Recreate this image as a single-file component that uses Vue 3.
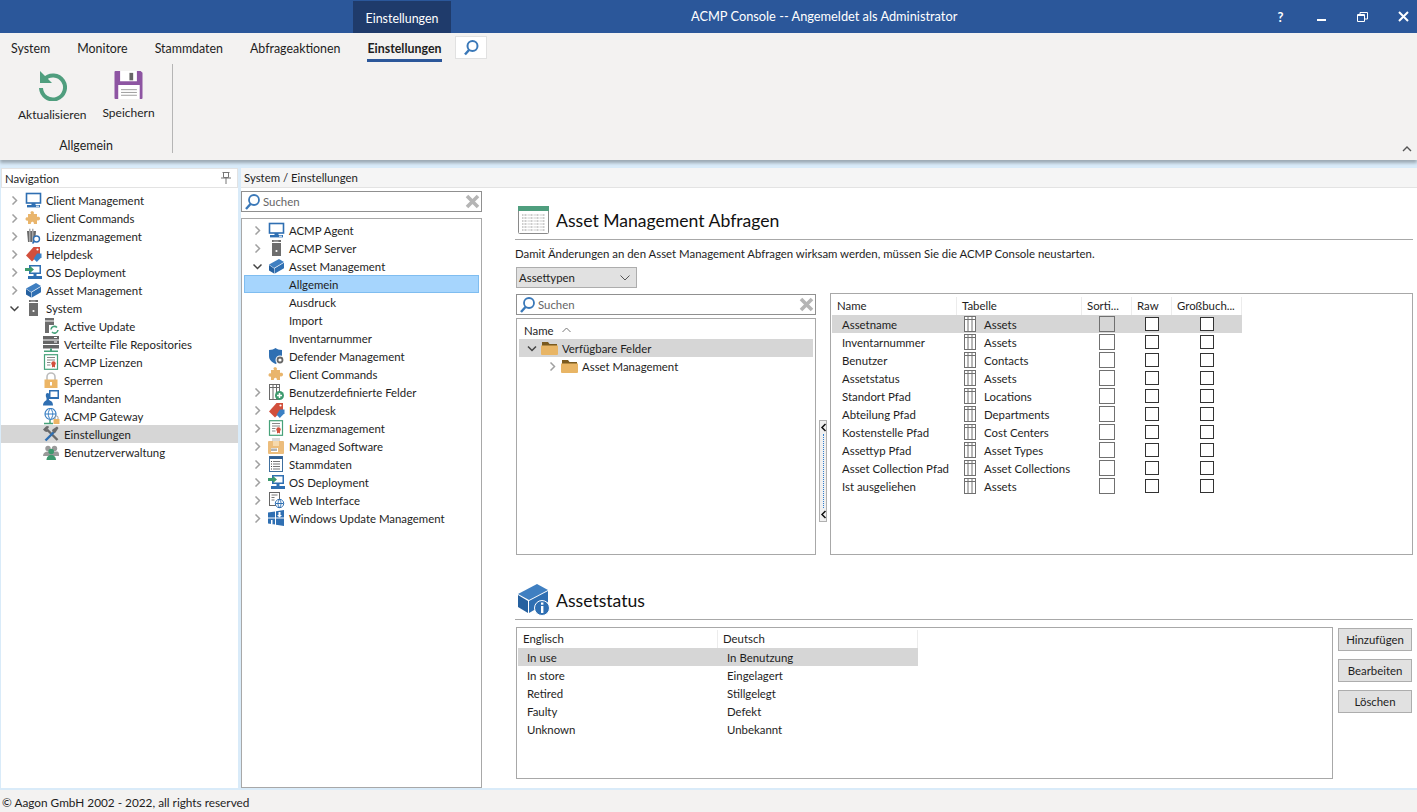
<script setup>
const tabs = ['System', 'Monitore', 'Stammdaten', 'Abfrageaktionen', 'Einstellungen']

const icons = {
  monitor: '<rect x="1.5" y="1.5" width="14" height="9.5" fill="#fff" stroke="#2f6fb2" stroke-width="1.6"/><rect x="6.5" y="11" width="4" height="2" fill="#2f6fb2"/><rect x="2" y="13" width="13" height="2.4" fill="#2f6fb2"/><rect x="11" y="13.7" width="3" height="1" fill="#fff"/>',
  puzzle: '<path fill="#e9b56c" d="M6 1.5c2-1 3.6.4 2.7 2.4H12v3.2c2-.9 3.8.5 2.8 2.4-.8 1.3-1.8 1.2-2.8.8V14H8.800c.7-2-2-3-2.800-1.300-.3.500-.2 1 0 1.300H3V10.500C1 11.400-.2 9 1 7.800c.6-.6 1.300-.5 2-.2V3.900h3.200C5.300 3 5.200 2 6 1.500z"/>',
  licence: '<path fill="#6a6a6a" d="M2 3h9l-1 11H3z"/><path fill="#a8a8a8" d="M4 .8h1.500V14H4zM7 .8h1.500V14H7z"/><circle cx="11.500" cy="11" r="3" fill="#fff" stroke="#2f6fb2" stroke-width="1.400"/><path stroke="#2f6fb2" stroke-width="1.600" d="M9.500 13l-2 2.500"/>',
  tag: '<path fill="#d24f3c" d="M8.500 1H15v6.500L7 15.500 1 9.500z"/><circle cx="12.500" cy="3.500" r="1.100" fill="#fff"/><path fill="#3b80c4" d="M12 7.500h4.500v3.800L11.800 16 8.600 12.800z"/>',
  deploy: '<rect x="4" y="1" width="12" height="9" fill="#2f6fb2"/><rect x="5.500" y="2.500" width="9" height="6" fill="#fff"/><path fill="#2f6fb2" d="M8.500 10h3v2h-3zM3 12h14v3H3z"/><path fill="#3d9a6e" d="M0 4h5V2l4 3.500L5 9V7H0z"/>',
  box: '<path fill="#3f7fc1" d="M1 6.500 11 1l5 3-10 6z"/><path fill="#25609f" d="M1 7v5.500L6 15.500V10.500z"/><path fill="#2f6fb2" d="M6.500 10.500 16 4.800v5.500L6.500 15.800z"/>',
  server: '<rect x="4" y="0" width="9" height="16" fill="#6d6d6d"/><rect x="4" y="2" width="9" height="1" fill="#fff"/><rect x="5.500" y=".7" width="5" height=".8" fill="#ccc"/><circle cx="8.500" cy="11" r="1.100" fill="#fff"/>',
  update: '<rect x="2" y="0" width="9" height="15" fill="#6d6d6d"/><rect x="2" y="2.500" width="9" height="1" fill="#fff"/><path fill="#fff" d="M6 7h11v10H6z"/><path fill="none" stroke="#47a27a" stroke-width="1.600" d="M8 11.500a3.500 3.500 0 0 1 6-2M15 12a3.500 3.500 0 0 1-6 2"/>',
  repo: '<rect x="0" y="0" width="16" height="3.500" fill="#666"/><rect x="0" y="4.500" width="16" height="3.500" fill="#666"/><rect x="0" y="9" width="16" height="3.500" fill="#666"/><rect x="11" y="1" width="3" height="1" fill="#fff"/><rect x="11" y="5.500" width="3" height="1" fill="#fff"/><rect x="7" y="12.500" width="2" height="2.500" fill="#47a27a"/><rect x="1" y="14.500" width="14" height="1.500" fill="#47a27a"/>',
  cert: '<rect x="1.500" y=".7" width="13" height="14.600" fill="#fff" stroke="#47a27a" stroke-width="1.200"/><path stroke="#888" d="M4 3.500h8M4 6h8M4 8.500h3.500M4 11h3.500"/><circle cx="10.500" cy="9.500" r="2.200" fill="#d24f3c"/><path fill="#d24f3c" d="M9 11h3v2.500l-1.500-.8-1.500.8z"/>',
  lock: '<path fill="none" stroke="#bdbdbd" stroke-width="1.600" d="M4 8V5a4 4 0 0 1 8 0v3"/><rect x="1.500" y="7.500" width="13" height="8.500" fill="#ecb565"/><rect x="7" y="10" width="2" height="3.500" fill="#fff"/>',
  tenant: '<rect x="6" y="0" width="10" height="9" fill="#2f6fb2"/><rect x="7.500" y="1.500" width="7" height="5.500" fill="#fff"/><path fill="#2f6fb2" d="M4.500 3c2.500 0 2.500 3.500 1.500 5v2c1.500 1 4 1 4 5.500H0C0 12 2.500 11 3.500 10V8C2.500 6 2.500 3 4.500 3z"/>',
  gateway: '<circle cx="7.500" cy="6" r="5.500" fill="#fff" stroke="#3b80c4" stroke-width="1.200"/><path fill="none" stroke="#3b80c4" d="M2 6h11M7.500.5c-3 3-3 8 0 11M7.500.5c3 3 3 8 0 11"/><path stroke="#47a27a" stroke-width="1.500" d="M7 12v3M1 15.500h9"/><rect x="10.500" y="11" width="6" height="5" fill="#ecb565"/><path fill="none" stroke="#999" d="M12 11V9.500a1.500 1.500 0 0 1 3 0V11"/>',
  tools: '<path fill="none" stroke="#6a6a6a" stroke-width="2.400" d="M4 3.500 14.500 14"/><path fill="#6a6a6a" d="M0 3.500 3 .5l1-.5 2 .5-.5 1.500-2 2 2 .5-1.500 1.500-2-.5z"/><path fill="none" stroke="#2f6fb2" stroke-width="2.400" d="M12 5 2.500 14.500"/><path fill="#6a6a6a" d="M9.500 3.500 14 .5l1.500 1.500L12.500 6.500l-1.500.5-2-2z"/>',
  users: '<circle cx="5" cy="4.500" r="2.700" fill="#9a9a9a"/><circle cx="11.500" cy="4.500" r="2.700" fill="#9a9a9a"/><path fill="#9a9a9a" d="M0 12c0-3 2-4.500 5-4.500s6 0 8.500 0S16 9 16 12z"/><circle cx="8.200" cy="7.500" r="2.800" fill="#3d9a6e"/><path fill="#3d9a6e" d="M3.500 16c0-3 2-5 4.700-5s4.800 2 4.800 5z"/>',
  shield: '<path fill="#2f6fb2" d="M1 2c3 0 5-1 6.500-2C9 1 11 2 14 2v6c0 4-3 6-6.500 8C4 14 1 12 1 8z"/><circle cx="12" cy="12" r="4.500" fill="#fff"/><circle cx="12" cy="12" r="2.500" fill="none" stroke="#666" stroke-width="1.800"/>',
  tableadd: '<rect x="1.500" y=".5" width="10" height="15" fill="#fff" stroke="#6a6a6a"/><path stroke="#6a6a6a" d="M1.500 3.500h10M5 .5v15M8.500 .5v15"/><circle cx="11.500" cy="11.500" r="4.500" fill="#3d9a6e"/><path stroke="#fff" stroke-width="1.500" d="M11.500 9v5M9 11.500h5"/>',
  package: '<path fill="#d9d9d9" d="M4 0h8v4H4z"/><rect x="0" y="3" width="16" height="13" rx="1" fill="#ecbd7c"/><rect x="5" y="3" width="6" height="5" fill="#f6d9ad"/><rect x="3" y="10" width="7" height="4" fill="#fff"/><path stroke="#666" d="M4 10.500V13M6 10.500V13M8 10.500V13"/>',
  list: '<rect x="1.500" y=".5" width="13" height="15" fill="#fff" stroke="#3f6f9e"/><rect x="1.500" y=".5" width="13" height="2.500" fill="#2f5f94"/><path stroke="#777" d="M5 5.500h7M5 8h7M5 10.500h7M5 13h7"/><path stroke="#444" d="M3 5.500h1M3 8h1M3 10.500h1M3 13h1"/>',
  web: '<rect x="1.500" y=".5" width="10" height="13" fill="#fff" stroke="#666"/><path stroke="#777" d="M3.500 3h6M3.500 5.500h3M3.500 8h3"/><circle cx="11.500" cy="11.500" r="4.200" fill="#fff" stroke="#2f6fb2"/><path fill="none" stroke="#2f6fb2" d="M7.500 11.500h8M11.500 7.300c-2 2.500-2 6 0 8.400M11.500 7.300c2 2.500 2 6 0 8.400"/>',
  windows: '<path fill="#2f6fb2" d="M0 2.500 7 1.500V7.500H0zM8 1.300 16 0v7.500H8zM0 8.500h7v6l-7-1zM8 8.500h8V16l-8-1.300z"/><path fill="#fff" d="M10.500 2h2v3h1.500l-2.500 2.400L9 5h1.500zM3 10h1.500v4H3z"/>',
  folder: '<path fill="#7a5a1f" d="M1 2h6l1.500 2H16v3H1z"/><path fill="#e8b565" d="M0 5.500h17v8.500a1 1 0 0 1-1 1H1a1 1 0 0 1-1-1z"/>',
  column: '<rect x=".5" y=".5" width="11" height="15" fill="#fff" stroke="#707070"/><path stroke="#707070" d="M.5 3.500h11M4 .5v15M8 .5v15"/>'
}

const navTree = [
  { label: 'Client Management', icon: 'monitor', arrow: 'closed' },
  { label: 'Client Commands', icon: 'puzzle', arrow: 'closed' },
  { label: 'Lizenzmanagement', icon: 'licence', arrow: 'closed' },
  { label: 'Helpdesk', icon: 'tag', arrow: 'closed' },
  { label: 'OS Deployment', icon: 'deploy', arrow: 'closed' },
  { label: 'Asset Management', icon: 'box', arrow: 'closed' },
  { label: 'System', icon: 'server', arrow: 'open' },
  { label: 'Active Update', icon: 'update', sub: true },
  { label: 'Verteilte File Repositories', icon: 'repo', sub: true },
  { label: 'ACMP Lizenzen', icon: 'cert', sub: true },
  { label: 'Sperren', icon: 'lock', sub: true },
  { label: 'Mandanten', icon: 'tenant', sub: true },
  { label: 'ACMP Gateway', icon: 'gateway', sub: true },
  { label: 'Einstellungen', icon: 'tools', sub: true, selected: true },
  { label: 'Benutzerverwaltung', icon: 'users', sub: true }
]

const settingsTree = [
  { label: 'ACMP Agent', icon: 'monitor', arrow: 'closed' },
  { label: 'ACMP Server', icon: 'server', arrow: 'closed' },
  { label: 'Asset Management', icon: 'box', arrow: 'open' },
  { label: 'Allgemein', selected: true },
  { label: 'Ausdruck' },
  { label: 'Import' },
  { label: 'Inventarnummer' },
  { label: 'Defender Management', icon: 'shield' },
  { label: 'Client Commands', icon: 'puzzle' },
  { label: 'Benutzerdefinierte Felder', icon: 'tableadd', arrow: 'closed' },
  { label: 'Helpdesk', icon: 'tag', arrow: 'closed' },
  { label: 'Lizenzmanagement', icon: 'cert', arrow: 'closed' },
  { label: 'Managed Software', icon: 'package', arrow: 'closed' },
  { label: 'Stammdaten', icon: 'list', arrow: 'closed' },
  { label: 'OS Deployment', icon: 'deploy', arrow: 'closed' },
  { label: 'Web Interface', icon: 'web', arrow: 'closed' },
  { label: 'Windows Update Management', icon: 'windows', arrow: 'closed' }
]

const fields = [
  ['Assetname', 'Assets'],
  ['Inventarnummer', 'Assets'],
  ['Benutzer', 'Contacts'],
  ['Assetstatus', 'Assets'],
  ['Standort Pfad', 'Locations'],
  ['Abteilung Pfad', 'Departments'],
  ['Kostenstelle Pfad', 'Cost Centers'],
  ['Assettyp Pfad', 'Asset Types'],
  ['Asset Collection Pfad', 'Asset Collections'],
  ['Ist ausgeliehen', 'Assets']
]

const states = [
  ['In use', 'In Benutzung'],
  ['In store', 'Eingelagert'],
  ['Retired', 'Stillgelegt'],
  ['Faulty', 'Defekt'],
  ['Unknown', 'Unbekannt']
]
</script>

<template>
  <div class="app">
    <header class="titlebar">
      <div class="context-tab">Einstellungen</div>
      <div class="title">ACMP Console -- Angemeldet als Administrator</div>
      <div class="window-buttons">
        <span class="help">?</span>
        <svg width="11" height="11" viewBox="0 0 11 11"><rect x="1" y="8" width="9" height="2" fill="#fff" /></svg>
        <svg width="11" height="11" viewBox="0 0 11 11" fill="none" stroke="#fff"><path d="M.5 3.500h7v7h-7zM.5 4.500h7M3 3V1.500h7.500V8H8" /></svg>
        <svg width="11" height="11" viewBox="0 0 11 11" stroke="#fff" stroke-width="2"><path d="M1 1l9 9M10 1l-9 9" /></svg>
      </div>
    </header>

    <nav class="ribbon-tabs">
      <span v-for="t in tabs" :key="t" class="ribbon-tab" :class="{ active: t === 'Einstellungen' }">{{ t }}</span>
      <span class="ribbon-search">
        <svg width="18" height="18" viewBox="0 0 18 18" fill="none" stroke="#3a78b8" stroke-width="2"><circle cx="10.500" cy="7" r="5" /><path stroke-width="2.500" d="M7 11l-4 4.500" /></svg>
      </span>
    </nav>

    <section class="ribbon">
      <div class="ribbon-group">
        <div class="ribbon-buttons">
          <div class="ribbon-button refresh">
            <svg width="30" height="30" viewBox="0 0 30 30" fill="none">
              <path stroke="#4f9e7e" stroke-width="4" d="M7 8.500A12 12 0 1 1 4 17" />
              <path fill="#4f9e7e" d="M3 0v12h12z" />
            </svg>
            <span>Aktualisieren</span>
          </div>
          <div class="ribbon-button save">
            <svg width="29" height="28" viewBox="0 0 30 30">
              <path fill="#8d55a2" d="M1 0h27l2 2v27a1 1 0 0 1-1 1H1a1 1 0 0 1-1-1V1a1 1 0 0 1 1-1z" />
              <rect x="6" y="0" width="18" height="11" fill="#fff" />
              <rect x="16" y="2" width="4" height="8" fill="#666" />
              <rect x="4" y="15" width="23" height="15" fill="#fff" />
              <path stroke="#999" d="M7 20h17M7 23h17M7 26h17" />
            </svg>
            <span>Speichern</span>
          </div>
        </div>
        <div class="group-label">Allgemein</div>
      </div>
      <svg class="collapse" width="10" height="6" viewBox="0 0 10 6" fill="none" stroke="#555" stroke-width="1.400"><path d="M1 5l4-4 4 4" /></svg>
    </section>

    <main class="workspace">
      <aside class="nav-panel">
        <div class="panel-head">
          <span>Navigation</span>
          <svg width="12" height="12" viewBox="0 0 12 12" fill="none" stroke="#777"><path d="M2.500.5h7M3.500.5v5h5v-5M1 6h10M6 6v6" /></svg>
        </div>
        <div class="nav-tree">
          <div v-for="row in navTree" :key="row.label" class="tree-row" :class="{ sub: row.sub, selected: row.selected }">
            <span class="arrow">
              <svg v-if="row.arrow" width="9" height="9" viewBox="0 0 9 9" fill="none" :stroke="row.arrow === 'open' ? '#444' : '#a0a0a0'" stroke-width="1.500">
                <path :d="row.arrow === 'open' ? 'M.5 2.500l4 4 4-4' : 'M2.500.5l4 4-4 4'" />
              </svg>
            </span>
            <svg class="icon" width="17" height="17" viewBox="0 0 17 17" v-html="icons[row.icon]"></svg>
            <span class="label">{{ row.label }}</span>
          </div>
        </div>
      </aside>

      <div class="settings-panel">
        <div class="crumb">System / Einstellungen</div>
        <div class="settings-body">
          <div class="settings-left">
            <div class="searchbox">
              <svg width="17" height="17" viewBox="0 0 17 17" fill="none" stroke="#3a78b8" stroke-width="1.800"><circle cx="10" cy="7" r="5" /><path stroke-width="2.400" d="M6.500 11l-4.500 5" /></svg>
              <span class="placeholder">Suchen</span>
              <svg class="clear" width="15" height="15" viewBox="0 0 15 15" stroke="#b5b5b5" stroke-width="3.600"><path d="M2 2l11 11M13 2L2 13" /></svg>
            </div>
            <div class="settings-tree">
              <div v-for="row in settingsTree" :key="row.label" class="tree-row" :class="{ picked: row.selected }">
                <span class="arrow">
                  <svg v-if="row.arrow" width="9" height="9" viewBox="0 0 9 9" fill="none" :stroke="row.arrow === 'open' ? '#444' : '#a0a0a0'" stroke-width="1.500">
                    <path :d="row.arrow === 'open' ? 'M.5 2.500l4 4 4-4' : 'M2.500.5l4 4-4 4'" />
                  </svg>
                </span>
                <svg class="icon" width="17" height="17" viewBox="0 0 17 17" v-html="row.icon ? icons[row.icon] : ''"></svg>
                <span class="label">{{ row.label }}</span>
              </div>
            </div>
          </div>

          <div class="content">
            <div class="section-head">
              <svg width="32" height="29" viewBox="0 0 32 29">
                <rect x=".5" y=".5" width="30" height="27" rx="1" fill="#fff" stroke="#8a8a8a" />
                <rect x="0" y="0" width="31" height="5" fill="#4f9e7e" />
                <path stroke="#9a9a9a" stroke-dasharray="1 .5" d="M4 9h23M4 12h23M4 15h23M4 18h23M4 21h23M4 24h23" />
                <path stroke="#fff" d="M10 8v17M16 8v17M22 8v17" />
              </svg>
              <h2>Asset Management Abfragen</h2>
            </div>
            <p class="hint">Damit Änderungen an den Asset Management Abfragen wirksam werden, müssen Sie die ACMP Console neustarten.</p>
            <div class="select">
              <span>Assettypen</span>
              <svg width="10" height="6" viewBox="0 0 10 6" fill="none" stroke="#555"><path d="M.5.500l4.500 4.500 4.500-4.500" /></svg>
            </div>

            <div class="query-area">
              <div class="fields-col">
                <div class="searchbox">
                  <svg width="17" height="17" viewBox="0 0 17 17" fill="none" stroke="#3a78b8" stroke-width="1.800"><circle cx="10" cy="7" r="5" /><path stroke-width="2.400" d="M6.500 11l-4.500 5" /></svg>
                  <span class="placeholder">Suchen</span>
                  <svg class="clear" width="15" height="15" viewBox="0 0 15 15" stroke="#b5b5b5" stroke-width="3.600"><path d="M2 2l11 11M13 2L2 13" /></svg>
                </div>
                <div class="field-tree">
                  <div class="field-head">Name
                    <svg width="9" height="6" viewBox="0 0 9 6" fill="none" stroke="#777"><path d="M.5 5l4-4 4 4" /></svg>
                  </div>
                  <div class="field-row picked-grey">
                    <svg width="10" height="9" viewBox="0 0 9 9" fill="none" stroke="#444" stroke-width="1.500"><path d="M.5 2.500l4 4 4-4" /></svg>
                    <svg width="17" height="17" viewBox="0 0 17 17" v-html="icons.folder"></svg>
                    <span>Verfügbare Felder</span>
                  </div>
                  <div class="field-row nested">
                    <svg width="9" height="9" viewBox="0 0 9 9" fill="none" stroke="#a0a0a0" stroke-width="1.500"><path d="M2.500.5l4 4-4 4" /></svg>
                    <svg width="17" height="17" viewBox="0 0 17 17" v-html="icons.folder"></svg>
                    <span>Asset Management</span>
                  </div>
                </div>
              </div>

              <div class="splitter">
                <div class="splitter-bar">
                  <svg width="7" height="9" viewBox="0 0 7 9" fill="none" stroke="#111" stroke-width="1.500"><path d="M5.500 1 2 4.500 5.500 8" /></svg>
                  <i class="splitter-dots"></i>
                  <svg width="7" height="9" viewBox="0 0 7 9" fill="none" stroke="#111" stroke-width="1.500"><path d="M5.500 1 2 4.500 5.500 8" /></svg>
                </div>
              </div>

              <div class="field-table">
                <div class="grid-row grid-head">
                  <span>Name</span><span>Tabelle</span><span>Sorti...</span><span>Raw</span><span>Großbuch...</span>
                </div>
                <div v-for="(f, i) in fields" :key="f[0]" class="grid-row" :class="{ 'picked-grey': i === 0 }">
                  <span class="cell-name">{{ f[0] }}</span>
                  <span class="cell-table">
                    <svg width="12" height="16" viewBox="0 0 12 16" v-html="icons.column"></svg>
                    {{ f[1] }}
                  </span>
                  <span class="cell-check"><i class="check wide" :class="{ disabled: i === 0 }"></i></span>
                  <span class="cell-check"><i class="check"></i></span>
                  <span class="cell-check"><i class="check"></i></span>
                </div>
              </div>
            </div>

            <div class="section-head status-head">
              <svg width="32" height="32" viewBox="0 0 32 32">
                <path fill="#3f7fc1" d="M0 10 19 0l11 6-19 10z" />
                <path fill="#25609f" d="M0 11v12l10 6V17z" />
                <path fill="#2f6fb2" d="M11 17l19-10v11L11 29z" />
                <circle cx="24" cy="24" r="7.500" fill="#2f6fb2" stroke="#fff" />
                <rect x="23" y="22" width="2.400" height="7" fill="#fff" />
                <rect x="23" y="18.500" width="2.400" height="2.200" fill="#fff" />
              </svg>
              <h2>Assetstatus</h2>
            </div>

            <div class="status-area">
              <div class="status-table">
                <div class="status-row status-header"><span>Englisch</span><span>Deutsch</span></div>
                <div v-for="(s, i) in states" :key="s[0]" class="status-row" :class="{ 'picked-grey': i === 0 }">
                  <span>{{ s[0] }}</span><span>{{ s[1] }}</span>
                </div>
              </div>
              <div class="status-actions">
                <button>Hinzufügen</button>
                <button>Bearbeiten</button>
                <button>Löschen</button>
              </div>
            </div>
          </div>
        </div>
      </div>
    </main>

    <footer class="statusbar">© Aagon GmbH 2002 - 2022, all rights reserved</footer>
  </div>
</template>

<style scoped>
.app {
  width: 1417px;
  height: 812px;
  display: flex;
  flex-direction: column;
  overflow: hidden;
  font-family: Lato, sans-serif;
  font-size: 11.4px;
  color: #1e1e1e;
  background: #f0f0f0;
}

.titlebar {
  height: 33px;
  flex: none;
  display: flex;
  background: #2b579a;
  color: #fff;
  position: relative;
}
.context-tab {
  margin: 1px 0 0 353px;
  width: 98px;
  line-height: 35px;
  text-align: center;
  background: #1f3b6b;
  font-size: 12.4px;
}
.title {
  position: absolute;
  left: 691px;
  top: 0;
  line-height: 33px;
  font-size: 12.8px;
}
.window-buttons {
  margin-left: auto;
  padding-right: 8px;
  display: flex;
  align-items: center;
  gap: 30px;
}
.help {
  width: 11px;
  text-align: center;
  font-weight: 700;
  font-size: 13px;
}

.ribbon-tabs {
  height: 29px;
  flex: none;
  display: flex;
  align-items: stretch;
  gap: 27px;
  padding-left: 11px;
  background: #f3f2f1;
  font-size: 12.4px;
}
.ribbon-tab {
  line-height: 32px;
  position: relative;
}
.ribbon-tab.active {
  font-weight: 700;
}
.ribbon-tab.active::after {
  content: '';
  position: absolute;
  left: 0;
  right: 0;
  bottom: 0;
  height: 3px;
  background: #2b579a;
}
.ribbon-search {
  width: 32px;
  height: 23px;
  margin: 3px 0 0 -14px;
  display: flex;
  align-items: center;
  justify-content: center;
  background: #fff;
  border: 1px solid #e1e1e1;
  box-sizing: border-box;
}

.ribbon {
  height: 98px;
  flex: none;
  display: flex;
  position: relative;
  background: #f3f2f1;
  box-shadow: 0 3px 3px rgba(0, 0, 0, 0.28);
  z-index: 1;
}
.ribbon-group {
  width: 173px;
  height: 89px;
  margin-top: 2px;
  border-right: 1px solid #b5b5b5;
  box-sizing: border-box;
  display: flex;
  flex-direction: column;
}
.ribbon-buttons {
  display: flex;
  padding: 7px 0 0 18px;
  gap: 16px;
}
.ribbon-button {
  display: flex;
  flex-direction: column;
  align-items: center;
  gap: 6px;
  font-size: 12px;
}
.group-label {
  margin-top: auto;
  padding-bottom: 0;
  text-align: center;
  font-size: 12.4px;
  margin-right: 0;
}
.collapse {
  position: absolute;
  right: 5px;
  bottom: 8px;
}

.workspace {
  flex: 1;
  min-height: 0;
  display: flex;
  padding-top: 8px;
  background: #d9ebf9;
}
.nav-panel {
  width: 237px;
  margin: 0 3px 2px 1px;
  display: flex;
  flex-direction: column;
  background: #fff;
}
.panel-head {
  height: 20px;
  flex: none;
  display: flex;
  align-items: center;
  justify-content: space-between;
  padding: 0 5px 0 3px;
  border: 1px solid #e3e3e3;
  box-sizing: border-box;
}
.nav-tree {
  padding-top: 3px;
}
.tree-row {
  height: 18px;
  display: flex;
  align-items: center;
  white-space: nowrap;
}
.arrow {
  width: 24px;
  flex: none;
  display: flex;
  justify-content: flex-end;
  padding-right: 6px;
  box-sizing: border-box;
}
.tree-row .icon {
  flex: none;
  margin-right: 4px;
}
.tree-row.sub {
  padding-left: 18px;
}
.tree-row.selected {
  background: #d6d6d6;
}
.tree-row.picked {
  background: #a6d5fd;
  box-shadow: inset 0 0 0 1px #7fbdf0;
}

.settings-panel {
  flex: 1;
  min-width: 0;
  display: flex;
  flex-direction: column;
  background: #fff;
  margin-bottom: 2px;
}
.crumb {
  height: 20px;
  flex: none;
  padding-left: 3px;
  line-height: 19px;
  background: #f5f5f5;
  border-bottom: 1px solid #e3e3e3;
  box-sizing: border-box;
}
.settings-body {
  flex: 1;
  min-height: 0;
  display: flex;
}
.settings-left {
  width: 241px;
  flex: none;
  padding-top: 3px;
  display: flex;
  flex-direction: column;
  gap: 6px;
}
.searchbox {
  height: 21px;
  flex: none;
  display: flex;
  align-items: center;
  gap: 2px;
  padding: 0 1px 0 2px;
  border: 1px solid #909090;
  box-sizing: border-box;
  background: #fff;
}
.placeholder {
  color: #666;
}
.clear {
  margin-left: auto;
}
.settings-tree {
  flex: 1;
  padding: 2px;
  border: 1px solid #a8a8a8;
  box-sizing: border-box;
}

.content {
  flex: 1;
  min-width: 0;
  padding: 0 4px 0 33px;
}
.section-head {
  height: 52px;
  display: flex;
  align-items: center;
  gap: 6px;
  padding: 13px 0 0 3px;
  box-sizing: border-box;
  border-bottom: 1px solid #a8a8a8;
}
.section-head h2 {
  margin: 0;
  font-size: 17.6px;
  font-weight: 400;
  color: #111;
}
.hint {
  margin: 5px 0 0;
  line-height: 18px;
}
.select {
  width: 121px;
  height: 21px;
  margin: 4px 0 0 1px;
  padding: 0 6px 0 2px;
  display: flex;
  align-items: center;
  justify-content: space-between;
  background: #e1e1e1;
  border: 1px solid #adadad;
  box-sizing: border-box;
}

.query-area {
  display: flex;
  margin: 5px 0 0 1px;
  height: 262px;
}
.fields-col {
  width: 300px;
  display: flex;
  flex-direction: column;
  gap: 3px;
  padding-top: 1px;
}
.field-tree {
  flex: 1;
  padding: 2px;
  border: 1px solid #a8a8a8;
  box-sizing: border-box;
}
.field-head {
  height: 18px;
  padding-left: 5px;
  display: flex;
  align-items: center;
  gap: 8px;
}
.field-row {
  height: 18px;
  display: flex;
  align-items: center;
  gap: 4px;
  padding-left: 8px;
}
.field-row.nested {
  padding-left: 29px;
}
.picked-grey {
  background: #d6d6d6;
}
.splitter {
  width: 14px;
  flex: none;
  padding: 127px 3px 0;
  box-sizing: border-box;
}
.splitter-bar {
  height: 102px;
  display: flex;
  flex-direction: column;
  align-items: center;
  justify-content: space-between;
  padding: 2px 0;
  background: #f0f0f0;
  border: 1px solid #b0b0b0;
  box-sizing: border-box;
}
.splitter-dots {
  flex: 1;
  margin: 2px 0;
  border-left: 1px dotted #2f7fd0;
}
.field-table {
  flex: 1;
  padding: 3px 1px;
  border: 1px solid #a8a8a8;
  box-sizing: border-box;
}
.grid-row {
  width: 410px;
  height: 18px;
  display: grid;
  grid-template-columns: 125px 125px 50px 40px 70px;
  align-items: center;
  white-space: nowrap;
}
.grid-head span {
  height: 18px;
  line-height: 18px;
  padding-left: 5px;
  border-right: 1px solid #ececec;
  box-sizing: border-box;
}
.cell-name {
  padding-left: 10px;
}
.cell-table {
  display: flex;
  align-items: center;
  gap: 8px;
  padding-left: 7px;
}
.cell-check {
  display: flex;
  justify-content: center;
}
.check {
  width: 12px;
  height: 12px;
  border: 1px solid #333;
  background: #fff;
}
.check.wide {
  width: 14px;
  height: 14px;
  border-color: #707070;
}
.check.disabled {
  background: #d6d6d6;
}

.status-head {
  height: 65px;
  padding-top: 26px;
}
.status-area {
  display: flex;
  gap: 5px;
  margin: 7px 0 0 1px;
}
.status-table {
  width: 817px;
  height: 152px;
  padding: 2px 1px;
  border: 1px solid #a8a8a8;
  box-sizing: border-box;
}
.status-row {
  width: 400px;
  height: 18px;
  display: grid;
  grid-template-columns: 200px 200px;
  align-items: center;
}
.status-row span {
  padding-left: 9px;
}
.status-header span {
  height: 18px;
  line-height: 18px;
  padding-left: 5px;
  border-right: 1px solid #ececec;
  box-sizing: border-box;
}
.status-actions {
  display: flex;
  flex-direction: column;
  gap: 8px;
  padding-top: 1px;
}
button {
  width: 74px;
  height: 23px;
  padding: 0;
  font: inherit;
  color: inherit;
  background: #e1e1e1;
  border: 1px solid #adadad;
}

.statusbar {
  height: 22px;
  flex: none;
  padding-left: 2px;
  line-height: 26px;
  font-size: 11.8px;
  background: #f3f2f1;
}
</style>
